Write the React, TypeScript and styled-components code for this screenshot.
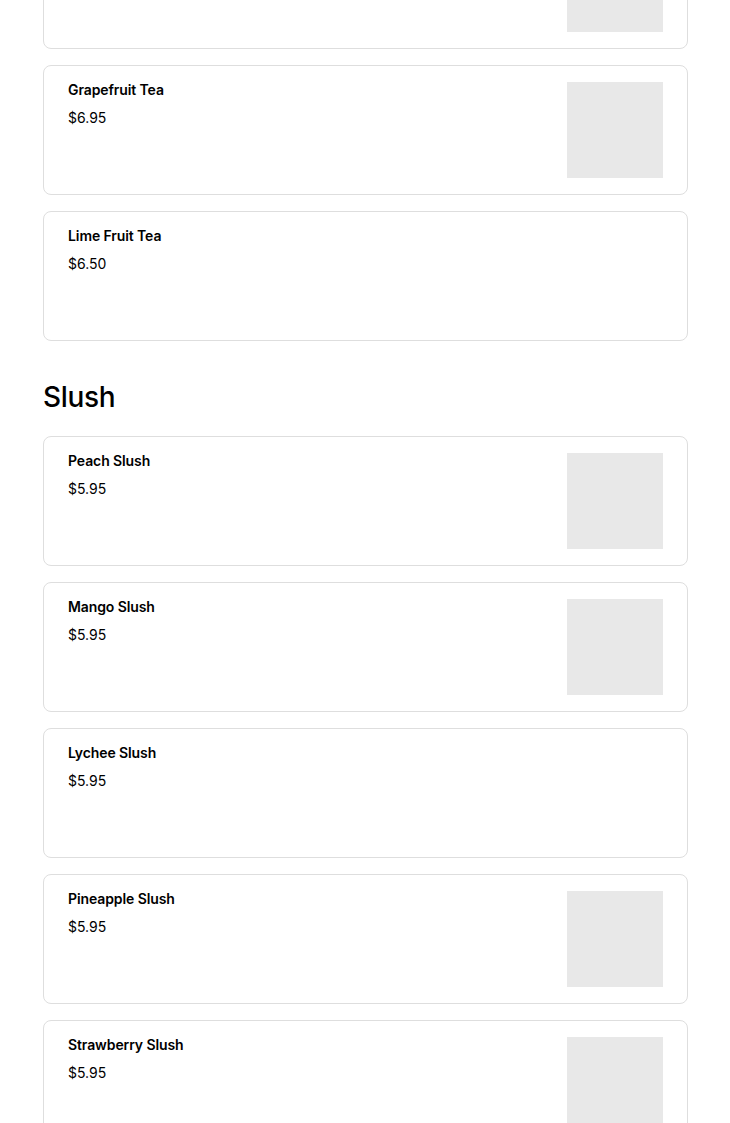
import React from "react";
import styled, { createGlobalStyle } from "styled-components";

const Global = createGlobalStyle`
  html, body { margin: 0; padding: 0; background: #fff; }
  body { font-family: Inter, "Noto Sans", Arial, sans-serif; color: #000; }
`;

const Page = styled.div`
  padding: 0 42px 0 43px;
  margin-top: -81px;
`;

const Section = styled.section`
  display: flex;
  flex-direction: column;
`;

const Heading = styled.h2`
  margin: 0;
  font-size: 28px;
  font-weight: 500;
  line-height: 36px;
  letter-spacing: -0.3px;
  padding: 38px 0 21px;
`;

const List = styled.div`
  display: flex;
  flex-direction: column;
  gap: 16px;
`;

const Card = styled.div`
  display: flex;
  justify-content: space-between;
  border: 1px solid #dedede;
  border-radius: 8px;
  padding: 16px 24px;
  height: 130px;
  box-sizing: border-box;
`;

const Info = styled.div`
  display: flex;
  flex-direction: column;
  gap: 10px;
`;

const Title = styled.div`
  font-size: 14px;
  font-weight: 600;
  line-height: 16px;
  letter-spacing: -0.1px;
`;

const Price = styled.div`
  font-size: 14px;
  font-weight: 400;
  line-height: 20px;
`;

const Thumb = styled.div`
  width: 96px;
  height: 96px;
  background: #e8e8e8;
  flex-shrink: 0;
`;

type Item = { name: string; price: string; img: boolean };

const tea: Item[] = [
  { name: "Passion Fruit Tea", price: "$6.95", img: true },
  { name: "Grapefruit Tea", price: "$6.95", img: true },
  { name: "Lime Fruit Tea", price: "$6.50", img: false },
];

const slush: Item[] = [
  { name: "Peach Slush", price: "$5.95", img: true },
  { name: "Mango Slush", price: "$5.95", img: true },
  { name: "Lychee Slush", price: "$5.95", img: false },
  { name: "Pineapple Slush", price: "$5.95", img: true },
  { name: "Strawberry Slush", price: "$5.95", img: true },
];

const Items = ({ items }: { items: Item[] }) => (
  <List>
    {items.map((it) => (
      <Card key={it.name}>
        <Info>
          <Title>{it.name}</Title>
          <Price>{it.price}</Price>
        </Info>
        {it.img && <Thumb />}
      </Card>
    ))}
  </List>
);

export default function App() {
  return (
    <>
      <Global />
      <Page>
        <Section>
          <Items items={tea} />
        </Section>
        <Section>
          <Heading>Slush</Heading>
          <Items items={slush} />
        </Section>
      </Page>
    </>
  );
}
